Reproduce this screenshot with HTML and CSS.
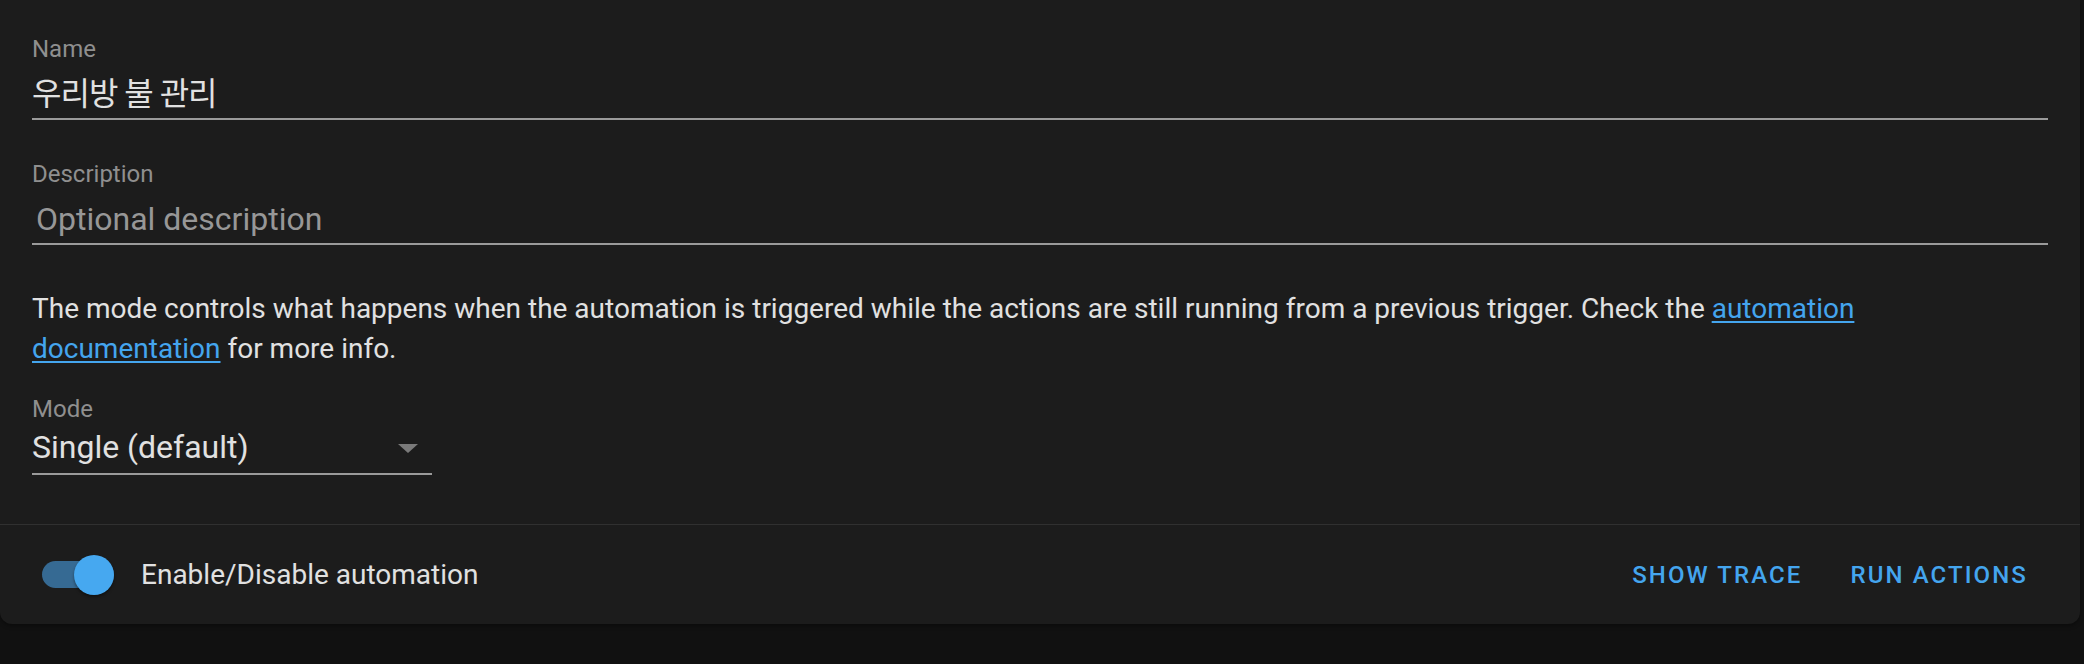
FILE: index.html
```html
<!DOCTYPE html>
<html lang="en">
<head>
<meta charset="utf-8">
<link rel="stylesheet" href="styles.css">
</head>
<body>
<div class="card">
  <div class="card-content">
    <div class="field field-name">
      <div class="field-label">Name</div>
      <div class="field-value name-value">우리방 불 관리</div>
    </div>
    <div class="field field-desc">
      <div class="field-label">Description</div>
      <div class="field-value placeholder">Optional description</div>
    </div>
    <p class="mode-help">The mode controls what happens when the automation is triggered while the actions are still running from a previous trigger. Check the <a href="#" class="link">automation documentation</a> for more info.</p>
    <div class="select">
      <div class="field-label">Mode</div>
      <div class="select-row">
        <span class="select-value">Single (default)</span>
        <svg class="select-arrow" width="20" height="9" viewBox="0 0 20 9"><polygon points="0,0 20,0 10,9" fill="#7a7a7a"/></svg>
      </div>
    </div>
  </div>
  <div class="card-actions">
    <div class="toggle-wrap">
      <div class="toggle">
        <div class="toggle-track"></div>
        <div class="toggle-thumb"></div>
      </div>
      <span class="toggle-label">Enable/Disable automation</span>
    </div>
    <div class="buttons">
      <button class="btn">Show trace</button>
      <button class="btn">Run actions</button>
    </div>
  </div>
</div>
</body>
</html>
```

FILE: styles.css
```css
html, body {
  margin: 0;
  padding: 0;
}
body {
  background: #111111;
  width: 2084px;
  height: 664px;
  overflow: hidden;
  font-family: Roboto, "Noto Sans CJK KR", sans-serif;
  color: #e1e1e1;
}
.card {
  width: 2080px;
  background: #1c1c1c;
  border-radius: 0 0 12px 12px;
  box-shadow: 0 2px 4px rgba(0,0,0,0.35);
}
.card-content {
  padding: 35px 32px 49px 32px;
}
.field {
  display: flex;
  flex-direction: column;
  border-bottom: 2px solid #9a9a9a;
  padding-bottom: 6px;
}
.field-desc {
  margin-top: 40px;
}
.field-label {
  font-size: 24px;
  line-height: 28px;
  color: #8f8f8f;
}
.field-value {
  margin-top: 13px;
  font-size: 32px;
  line-height: 36px;
  height: 36px;
  color: #e1e1e1;
}
.name-value {
  letter-spacing: -1px;
}
.placeholder {
  color: #979797;
  padding-left: 4px;
}
.mode-help {
  margin: 44px 0 0 0;
  padding-right: 24px;
  font-size: 28px;
  line-height: 40px;
  color: #e1e1e1;
}
.link {
  color: #44a5ee;
  text-decoration: underline;
  text-decoration-thickness: 2px;
  text-underline-offset: 3px;
}
.select {
  margin-top: 26px;
  width: 400px;
  border-bottom: 2px solid #9a9a9a;
  padding-bottom: 8px;
}
.select-row {
  margin-top: 6px;
  display: flex;
  align-items: center;
  justify-content: space-between;
  height: 36px;
  padding-right: 14px;
}
.select-value {
  font-size: 32px;
  line-height: 36px;
  color: #e1e1e1;
}
.select-arrow {
  display: block;
  margin-top: 2px;
}
.card-actions {
  border-top: 1px solid #303030;
  height: 99px;
  display: flex;
  align-items: center;
  justify-content: space-between;
  padding: 0 36px 0 42px;
}
.toggle-wrap {
  display: flex;
  align-items: center;
  gap: 27px;
}
.toggle {
  position: relative;
  width: 72px;
  height: 40px;
  display: flex;
  align-items: center;
}
.toggle-track {
  width: 72px;
  height: 27px;
  border-radius: 14px;
  background: #366a93;
}
.toggle-thumb {
  position: absolute;
  right: 0;
  top: 0;
  width: 40px;
  height: 40px;
  border-radius: 50%;
  background: #46a8f0;
  box-shadow: 0 2px 3px rgba(0,0,0,0.4);
}
.toggle-label {
  font-size: 28px;
  line-height: 40px;
  color: #e1e1e1;
}
.buttons {
  display: flex;
  align-items: center;
  gap: 16px;
}
.btn {
  background: none;
  border: none;
  padding: 0 16px;
  height: 48px;
  font-family: Roboto, sans-serif;
  font-weight: 500;
  font-size: 24px;
  letter-spacing: 2.1px;
  text-transform: uppercase;
  color: #44a5ee;
}
```
